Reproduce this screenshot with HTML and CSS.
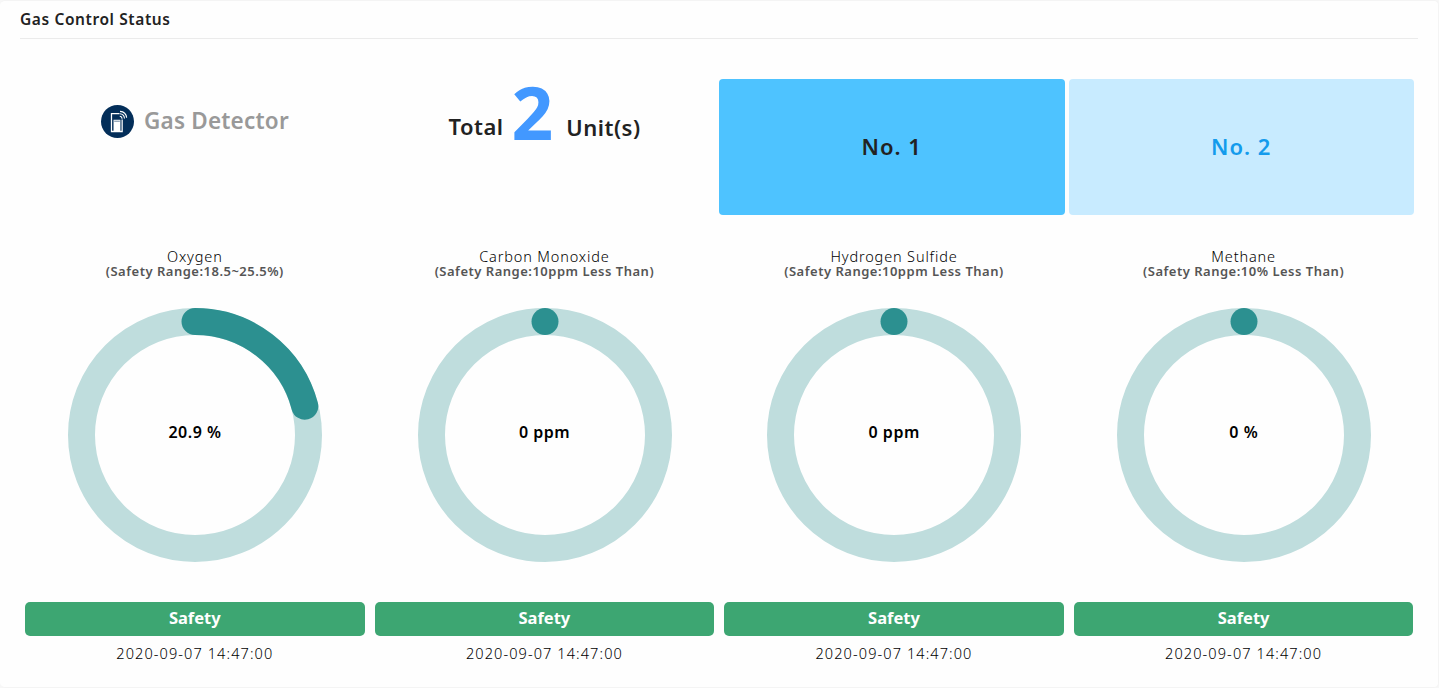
FILE: index.html
```html
<!DOCTYPE html>
<html lang="en">
<head>
<meta charset="utf-8">
<title>Gas Control Status</title>
<link rel="stylesheet" href="styles.css">
</head>
<body>
<main class="card">
  <h1 class="title"><span>Gas Control Status</span></h1>
  <section class="summary">
    <div class="device">
      <svg class="device-icon" viewBox="0 0 34 34">
        <circle cx="17" cy="17" r="17" fill="#032e59"/>
        <path d="M19 9H10.8V27.3H21.8V15" fill="none" stroke="#fff" stroke-width="1.3"/>
        <path d="M12.9 15.2H20V27H12.9z" fill="#fff"/>
        <path d="M13.6 16.7h5.8" stroke="#032e59" stroke-width=".6"/>
        <path d="M19.3 11.6q2.2 0 2.4 2.5M19.3 9q4.6.2 4.9 5M19.6 6.6q6.2.5 6.8 6.5" fill="none" stroke="#fff" stroke-width="1.1"/>
      </svg>
      <span class="device-name">Gas Detector</span>
    </div>
    <div class="total"><span class="total-label">Total</span><span class="total-count">2</span><span class="total-unit">Unit(s)</span></div>
    <nav class="tabs">
      <div class="tab tab-active"><span>No. 1</span></div>
      <div class="tab"><span>No. 2</span></div>
    </nav>
  </section>
  <section class="gauges">
    <article class="gauge">
      <div class="name">Oxygen</div>
      <div class="range">(Safety Range:18.5~25.5%)</div>
      <div class="dial">
        <svg viewBox="0 0 254 254"><circle class="track" cx="127" cy="127" r="113.5"/><path class="value" d="M127 13.5A113.5 113.5 0 0 1 236.8 98.2"/></svg>
        <span class="reading">20.9 %</span>
      </div>
      <div class="status">Safety</div>
      <time class="time">2020-09-07 14:47:00</time>
    </article>
    <article class="gauge">
      <div class="name">Carbon Monoxide</div>
      <div class="range">(Safety Range:10ppm Less Than)</div>
      <div class="dial">
        <svg viewBox="0 0 254 254"><circle class="track" cx="127" cy="127" r="113.5"/><path class="value" d="M127 13.5h.01"/></svg>
        <span class="reading">0 ppm</span>
      </div>
      <div class="status">Safety</div>
      <time class="time">2020-09-07 14:47:00</time>
    </article>
    <article class="gauge">
      <div class="name">Hydrogen Sulfide</div>
      <div class="range">(Safety Range:10ppm Less Than)</div>
      <div class="dial">
        <svg viewBox="0 0 254 254"><circle class="track" cx="127" cy="127" r="113.5"/><path class="value" d="M127 13.5h.01"/></svg>
        <span class="reading">0 ppm</span>
      </div>
      <div class="status">Safety</div>
      <time class="time">2020-09-07 14:47:00</time>
    </article>
    <article class="gauge">
      <div class="name">Methane</div>
      <div class="range">(Safety Range:10% Less Than)</div>
      <div class="dial">
        <svg viewBox="0 0 254 254"><circle class="track" cx="127" cy="127" r="113.5"/><path class="value" d="M127 13.5h.01"/></svg>
        <span class="reading">0 %</span>
      </div>
      <div class="status">Safety</div>
      <time class="time">2020-09-07 14:47:00</time>
    </article>
  </section>
</main>
</body>
</html>
```
FILE: styles.css
```css
* { box-sizing: border-box; }
body { margin: 0; background: #f7f7f7; font-family: "Noto Sans", "Open Sans", sans-serif; color: #222; }
.card { height: 688px; padding: 0 20px; background: #fefefe; border: 1px solid #f4f4f4; border-left: 0; border-radius: 5px; }
.title { margin: 0; height: 38px; padding-top: 7px; border-bottom: 1px solid #ebebeb; font-size: 15.5px; line-height: 22px; font-weight: 600; letter-spacing: .6px; }
.summary { display: grid; grid-template-columns: 349.5px 349.5px 695px; height: 176px; padding-top: 40px; }
.device { display: flex; align-items: center; gap: 10px; height: 84px; padding-left: 81px; }
.device-icon { width: 33px; height: 33px; }
.device-name { font-size: 22.5px; font-weight: 600; color: #999; letter-spacing: .2px; line-height: 30px; }
.total { display: flex; align-items: baseline; height: 84px; padding-left: 79px; font-size: 22px; font-weight: 600; line-height: 68px; letter-spacing: .5px; }
.total-label, .total-unit { position: relative; top: -5px; }
.total-unit { top: -4px; margin-left: 15px; }
.total-count { margin-left: 8px; color: #4298ff; font-size: 73px; font-weight: 700; letter-spacing: -2px; line-height: 66px; }
.tabs { display: grid; grid-template-columns: 1fr 1fr; gap: 4px; height: 136px; }
.tab { display: flex; align-items: center; justify-content: center; padding-bottom: 2px; background: #c8ebff; color: #149bec; border-radius: 4px; font-size: 22px; font-weight: 600; letter-spacing: 1px; }
.tab-active { background: #4ec3ff; color: #222; }
.gauges { display: grid; grid-template-columns: repeat(4, 349.6px); margin-top: 34px; }
.gauge { display: flex; flex-direction: column; align-items: center; padding: 0 5px; }
.name { height: 15px; line-height: 15px; font-size: 14.5px; font-weight: 300; color: #000; letter-spacing: .85px; white-space: nowrap; }
.range { height: 15px; line-height: 15px; font-size: 13px; font-weight: 600; color: #555; letter-spacing: .5px; white-space: nowrap; }
.dial { display: grid; place-items: center; width: 254px; height: 254px; margin: 29px 0 0 .4px; }
.dial > * { grid-area: 1 / 1; }
.dial svg { width: 254px; height: 254px; }
.track { fill: none; stroke: #bfdddd; stroke-width: 27; }
.value { fill: none; stroke: #2c9090; stroke-width: 27; stroke-linecap: round; }
.reading { color: #000; font-size: 16px; font-weight: 600; line-height: 22px; letter-spacing: .5px; margin-bottom: 7px; }
.status { width: 100%; height: 34px; margin-top: 40px; background: #3da672; border-radius: 5px; color: #fff; text-align: center; font-size: 16.5px; font-weight: 700; line-height: 32px; }
.time { margin-top: 6px; font-size: 14.5px; font-weight: 300; color: #000; letter-spacing: 1.1px; line-height: 22px; }
```
